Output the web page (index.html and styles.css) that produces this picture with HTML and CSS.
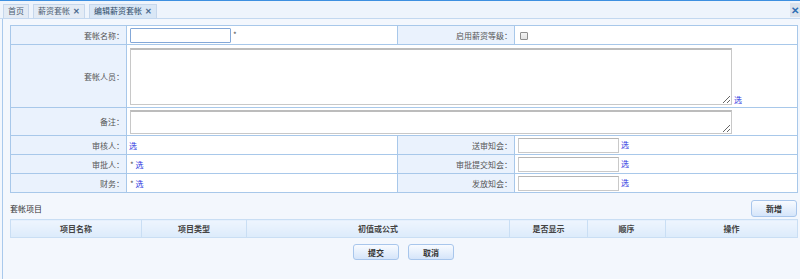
FILE: index.html
```html
<!DOCTYPE html>
<html lang="zh">
<head>
<meta charset="utf-8">
<title>编辑薪资套帐</title>
<link rel="stylesheet" href="styles.css">
</head>
<body>
<div class="tabbar">
  <div class="tab">首页</div>
  <div class="tab">薪资套帐<span class="x">✕</span></div>
  <div class="tab active">编辑薪资套帐<span class="x">✕</span></div>
  <div class="close">✕</div>
</div>
<div class="panel">
  <table class="form">
    <colgroup><col class="c1"><col class="c2"><col class="c3"><col class="c4"></colgroup>
    <tr class="r19">
      <td class="lbl">套帐名称：</td>
      <td class="val"><input class="inp focus" type="text"><span class="star">*</span></td>
      <td class="lbl">启用薪资等级：</td>
      <td class="val"><span class="chk"></span></td>
    </tr>
    <tr class="r63">
      <td class="lbl">套帐人员：</td>
      <td class="val" colspan="3"><div class="ta-wrap"><textarea class="ta ta1"></textarea><a class="sel">选</a></div></td>
    </tr>
    <tr class="r28">
      <td class="lbl">备注：</td>
      <td class="val" colspan="3"><div class="ta-wrap"><textarea class="ta ta2"></textarea></div></td>
    </tr>
    <tr class="r19">
      <td class="lbl">审核人：</td>
      <td class="val"><a class="sel">选</a></td>
      <td class="lbl">送审知会：</td>
      <td class="val"><input class="inp" type="text"><a class="sel">选</a></td>
    </tr>
    <tr class="r19">
      <td class="lbl">审批人：</td>
      <td class="val"><span class="star2">*</span> <a class="sel">选</a></td>
      <td class="lbl">审批提交知会：</td>
      <td class="val"><input class="inp" type="text"><a class="sel">选</a></td>
    </tr>
    <tr class="r19">
      <td class="lbl">财务：</td>
      <td class="val"><span class="star2">*</span> <a class="sel">选</a></td>
      <td class="lbl">发放知会：</td>
      <td class="val"><input class="inp" type="text"><a class="sel">选</a></td>
    </tr>
  </table>

  <div class="subhead">
    <span class="subtitle">套帐项目</span>
    <button class="btn">新增</button>
  </div>
  <table class="grid">
    <tr>
      <th class="g1">项目名称</th>
      <th class="g2">项目类型</th>
      <th class="g3">初值或公式</th>
      <th class="g4">是否显示</th>
      <th class="g5">顺序</th>
      <th class="g6">操作</th>
    </tr>
  </table>
  <div class="actions">
    <button class="btn">提交</button>
    <button class="btn">取消</button>
  </div>
</div>
</body>
</html>
```

FILE: styles.css
```css
* { box-sizing: border-box; }
html, body {
  margin: 0;
  padding: 0;
  height: 279px;
  overflow: hidden;
  background: #f3f7fd;
  font-family: "Noto Sans CJK SC", "Noto Sans", sans-serif;
  font-size: 8px;
  color: #444;
}
.tabbar {
  display: flex;
  align-items: flex-end;
  gap: 4px;
  height: 19px;
  border-top: 1px solid #3d8fe0;
  border-bottom: 1px solid #c3d8f0;
  background: #eef4fc;
  padding-left: 3px;
}
.tab {
  height: 14px;
  line-height: 12px;
  padding: 0 4px;
  border: 1px solid #c6d7ec;
  border-bottom: none;
  background: #e3ebf5;
  color: #4d5e72;
  white-space: nowrap;
}
.tab.active {
  background: #d9e7f6;
  color: #2f4a66;
}
.tab .x {
  font-weight: bold;
  color: #4c6c8f;
  margin-left: 3px;
}
.close {
  margin-left: auto;
  align-self: center;
  width: 10px;
  height: 14px;
  line-height: 14px;
  text-align: center;
  background: #dce3ec;
  color: #2f6fb5;
  font-weight: bold;
  font-size: 10px;
}
.panel {
  margin-left: 2px;
  border-left: 1px solid #a9c9ec;
  height: 260px;
  padding: 6px 3px 0 7px;
}
.form {
  border-collapse: collapse;
  width: 787px;
  table-layout: fixed;
  border: 1px solid #a8c8ea;
}
.c1 { width: 116px; }
.c2 { width: 271px; }
.c3 { width: 117px; }
.c4 { width: 283px; }
.form td {
  border: 1px solid #a8c8ea;
  padding: 0;
  white-space: nowrap;
}
.r19 td { height: 19px; }
.r63 td { height: 63px; }
.r28 td { height: 28px; }
.lbl {
  background: #eaf2fd;
  text-align: right;
  padding-right: 2px !important;
  color: #555;
}
.val {
  background: #fff;
  padding-left: 2px !important;
}
.inp {
  width: 101px;
  height: 15px;
  margin: 0 2px 0 1px;
  border: 1px solid #c9c9c9;
  border-top-color: #b5b5b5;
  vertical-align: middle;
  padding: 0;
  background: #fff;
}
.inp.focus {
  border: 1px solid #84a8d8;
  border-radius: 1px;
}
.star { color: #555; }
.star2 { color: #555; margin-left: 1px; }
.chk {
  display: inline-block;
  width: 8px;
  height: 8px;
  margin-left: 3px;
  border: 1px solid #8f8f8f;
  border-radius: 1px;
  background: linear-gradient(#f4f4f4, #e2e2e2);
  vertical-align: middle;
}
.sel {
  color: #2a32e0;
  cursor: pointer;
}
.ta-wrap {
  display: flex;
  align-items: flex-end;
  gap: 2px;
  padding-left: 1px;
}
.ta {
  display: block;
  width: 602px;
  border: 1px solid #c8c8c8;
  border-top: 2px solid #bcbcbc;
  resize: vertical;
  margin: 0;
  padding: 0;
  font-size: 8px;
  background: #fff;
}
.ta1 { height: 57px; }
.ta2 { height: 24px; }
.subhead {
  display: flex;
  justify-content: space-between;
  align-items: flex-end;
  margin-top: 7px;
  width: 787px;
}
.subtitle {
  color: #333;
  padding-bottom: 3px;
}
.btn {
  width: 46px;
  height: 17px;
  border: 1px solid #a8c6ec;
  border-radius: 3px;
  background: linear-gradient(#f8fbff, #d5e5fa);
  font-family: "Noto Sans CJK SC", "Noto Sans", sans-serif;
  font-size: 8px;
  font-weight: bold;
  color: #333;
  padding: 0;
}
.grid {
  border-collapse: collapse;
  width: 787px;
  table-layout: fixed;
  margin-top: 2px;
}
.grid th {
  height: 18px;
  border: 1px solid #c9def4;
  background: linear-gradient(#eef5fe, #dcebfb);
  font-weight: bold;
  color: #444;
  padding: 0;
}
.g1 { width: 131px; }
.g2 { width: 105px; }
.g3 { width: 263px; }
.g4 { width: 78px; }
.g5 { width: 78px; }
.g6 { width: 132px; }
.actions {
  display: flex;
  justify-content: center;
  gap: 9px;
  margin-top: 6px;
  width: 787px;
}
.actions .btn { width: 46px; height: 16px; }
```
